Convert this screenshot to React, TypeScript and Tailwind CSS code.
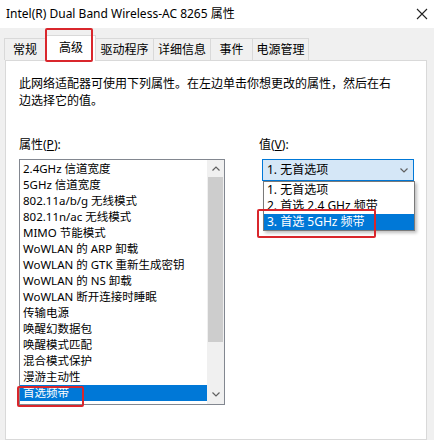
import React from "react";

const PROPS = [
  "2.4GHz 信道宽度",
  "5GHz 信道宽度",
  "802.11a/b/g 无线模式",
  "802.11n/ac 无线模式",
  "MIMO 节能模式",
  "WoWLAN 的 ARP 卸载",
  "WoWLAN 的 GTK 重新生成密钥",
  "WoWLAN 的 NS 卸载",
  "WoWLAN 断开连接时睡眠",
  "传输电源",
  "唤醒幻数据包",
  "唤醒模式匹配",
  "混合模式保护",
  "漫游主动性",
  "首选频带",
];

const VALUES = ["1. 无首选项", "2. 首选 2.4 GHz 频带", "3. 首选 5GHz 频带"];

const TABS = [
  { label: "常规", w: "w-[42px]" },
  { label: "高级", w: "w-[50px]", active: true },
  { label: "驱动程序", w: "w-[58px]" },
  { label: "详细信息", w: "w-[57px]" },
  { label: "事件", w: "w-[42px]" },
  { label: "电源管理", w: "w-[56px]" },
];

function Chevron({ up }: { up?: boolean }) {
  return (
    <svg width="8" height="5" viewBox="0 0 8 5" className={up ? "rotate-180" : ""}>
      <path d="M0.5 0.5 L4 4 L7.5 0.5" fill="none" stroke="#606060" strokeWidth="1.2" />
    </svg>
  );
}

export default function App() {
  return (
    <div
      className="relative w-[434px] h-[440px] overflow-hidden bg-[#f0f0f0] flex flex-col text-black text-[12px]"
      style={{ fontFamily: '"Noto Sans", "Noto Sans CJK SC", sans-serif' }}
    >
      {/* title bar */}
      <div className="h-[28px] bg-white flex items-center justify-between pl-[6px] pr-[6px] shrink-0">
        <span className="text-[12px]">Intel(R) Dual Band Wireless-AC 8265 属性</span>
        <svg width="12" height="12" viewBox="0 0 12 12">
          <path d="M1 1 L11 11 M11 1 L1 11" stroke="#222" strokeWidth="1.1" />
        </svg>
      </div>

      {/* tabs */}
      <div className="h-[32px] flex items-end pl-[4px] shrink-0">
        {TABS.map((t) =>
          t.active ? (
            <div
              key={t.label}
              className={`${t.w} h-[26px] bg-white border border-b-0 border-[#d9d9d9] flex items-center justify-center relative z-10 -mb-[1px] pb-[2px]`}
            >
              {t.label}
            </div>
          ) : (
            <div
              key={t.label}
              className={`${t.w} h-[22px] bg-[#f0f0f0] border border-b-0 border-l-0 first:border-l border-[#d9d9d9] flex items-center justify-center`}
            >
              {t.label}
            </div>
          )
        )}
      </div>

      {/* content panel */}
      <div className="ml-[5px] w-[422px] flex-1 bg-white border border-[#d9d9d9] pl-[13px] pt-[14px]">
        <p className="leading-[17px] w-[380px]">
          此网络适配器可使用下列属性。在左边单击你想更改的属性，然后在右边选择它的值。
        </p>

        <div className="flex mt-[28px]">
          {/* property list */}
          <div className="flex flex-col w-[206px]">
            <div className="leading-[16px] h-[22px]">
              属性(<span className="underline">P</span>):
            </div>
            <div className="h-[246px] border border-[#828790] flex text-[11.5px]">
              <div className="flex-1 pt-[1px] flex flex-col">
                {PROPS.map((p, i) =>
                  i === PROPS.length - 1 ? (
                    <div key={p} className="h-[16px] leading-[16px] pl-[3px] bg-[#0078d7] text-white">
                      {p}
                    </div>
                  ) : (
                    <div key={p} className="h-[16px] leading-[16px] pl-[3px] whitespace-nowrap">
                      {p}
                    </div>
                  )
                )}
              </div>
              <div className="w-[17px] bg-[#f0f0f0] flex flex-col">
                <div className="h-[17px] flex items-center justify-center">
                  <Chevron up />
                </div>
                <div className="h-[165px] mx-[1px] bg-[#cdcdcd]" />
                <div className="flex-1" />
                <div className="h-[17px] flex items-center justify-center mb-[1px]">
                  <Chevron />
                </div>
              </div>
            </div>
          </div>

          {/* value */}
          <div className="flex flex-col ml-[34px]">
            <div className="leading-[16px] h-[22px]">
              值(<span className="underline">V</span>):
            </div>
            <div className="ml-[3px] w-[152px] h-[22px] bg-[#d5e7f7] border border-[#0078d7] flex items-center justify-between pl-[4px] pr-[5px]">
              <span>1. 无首选项</span>
              <Chevron />
            </div>
          </div>
        </div>
      </div>

      {/* dropdown popup */}
      <div className="absolute left-[263px] top-[181px] w-[152px] bg-white border border-[#7a7a7a] shadow-[2px_2px_3px_rgba(0,0,0,0.25)] flex flex-col">
        {VALUES.map((v, i) => (
          <div
            key={v}
            className={`h-[16px] leading-[16px] pl-[3px] whitespace-nowrap ${
              i === 2 ? "bg-[#0078d7] text-white" : ""
            }`}
          >
            {v}
          </div>
        ))}
      </div>

      {/* red annotations */}
      <div className="absolute left-[45px] top-[28px] w-[48px] h-[34px] border-2 border-[#d9262c] rounded-[2px] z-20" />
      <div className="absolute left-[17px] top-[386px] w-[67px] h-[21px] border-2 border-[#d9262c] rounded-[2px]" />
      <div className="absolute left-[257px] top-[209px] w-[119px] h-[29px] border-2 border-[#d9262c] rounded-[2px]" />
    </div>
  );
}
